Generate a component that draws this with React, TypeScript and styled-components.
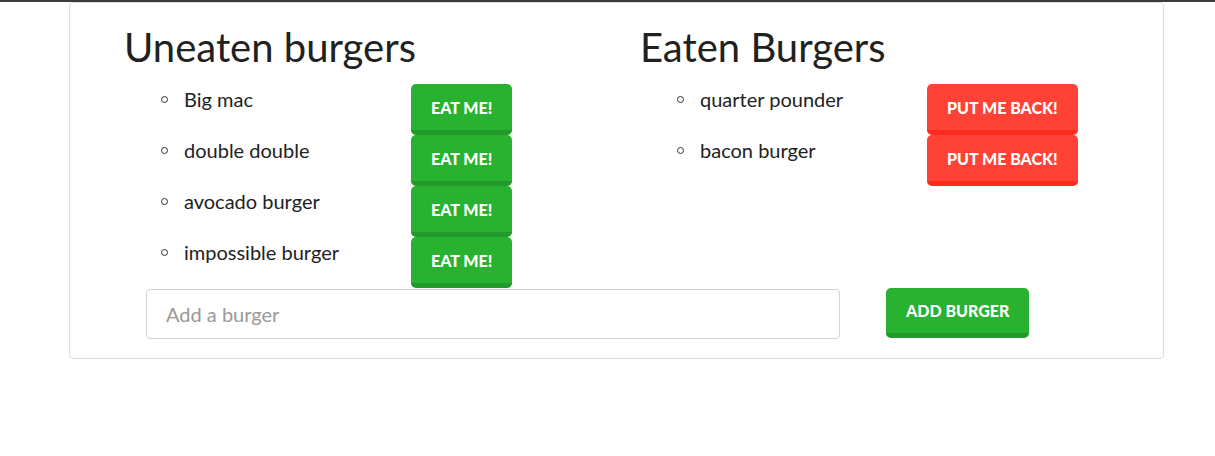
import React from "react";
import styled, { createGlobalStyle } from "styled-components";

const GlobalStyle = createGlobalStyle`
  html, body { margin: 0; padding: 0; background: #fff; }
  body {
    border-top: 2px solid #3c3c3c;
    font-family: Lato, "Noto Sans", sans-serif;
    color: #222;
  }
  * { box-sizing: border-box; }
`;

const Card = styled.div`
  margin-left: 69px;
  width: 1095px;
  border: 1px solid #dddddd;
  border-radius: 4px;
  padding: 20px 0 19px 0;
`;

const Columns = styled.div`
  display: grid;
  grid-template-columns: 516px 516px;
  padding-left: 55px;
`;

const Column = styled.section`
  display: flex;
  flex-direction: column;
`;

const Heading = styled.h1`
  margin: 0 0 13px -1px;
  font-size: 40px;
  font-weight: 400;
  line-height: 48px;
  color: #212121;
`;

const List = styled.ul`
  list-style: none;
  margin: 0;
  padding: 0;
`;

const Item = styled.li`
  display: grid;
  grid-template-columns: 59px 227px auto;
  align-items: start;
`;

const Bullet = styled.span`
  justify-self: end;
  margin: 12px 16px 0 0;
  width: 7px;
  height: 7px;
  border: 1px solid #333;
  border-radius: 50%;
`;

const Name = styled.span`
  font-size: 20px;
  line-height: 30px;
  color: #222;
`;

const ActionButton = styled.button<{ $tone: "green" | "red" }>`
  justify-self: start;
  height: 51px;
  padding: 0 20px;
  border: none;
  border-bottom: 5px solid ${(p) => (p.$tone === "green" ? "#22992a" : "#ff2b1f")};
  border-radius: 5px;
  background: ${(p) => (p.$tone === "green" ? "#28b22f" : "#ff4136")};
  color: #fff;
  font-family: Lato, "Noto Sans", sans-serif;
  font-weight: 900;
  font-size: 16px;
  text-transform: uppercase;
  cursor: pointer;
`;

const Form = styled.form`
  display: grid;
  grid-template-columns: 694px auto;
  column-gap: 46px;
  align-items: start;
  padding-left: 76px;
`;

const Input = styled.input`
  height: 50px;
  margin-top: 1px;
  padding: 0 19px;
  border: 1px solid #ced4da;
  border-radius: 4px;
  font-family: Lato, "Noto Sans", sans-serif;
  font-size: 20px;
  color: #333;
  outline: none;
  &::placeholder { color: #999; }
`;

const AddButton = styled(ActionButton)`
  height: 50px;
`;

const uneaten = ["Big mac", "double double", "avocado burger", "impossible burger"];
const eaten = ["quarter pounder", "bacon burger"];

export default function App() {
  return (
    <>
      <GlobalStyle />
      <Card>
        <Columns>
          <Column>
            <Heading>Uneaten burgers</Heading>
            <List>
              {uneaten.map((b) => (
                <Item key={b}>
                  <Bullet />
                  <Name>{b}</Name>
                  <ActionButton $tone="green">Eat me!</ActionButton>
                </Item>
              ))}
            </List>
          </Column>
          <Column>
            <Heading>Eaten Burgers</Heading>
            <List>
              {eaten.map((b) => (
                <Item key={b}>
                  <Bullet />
                  <Name>{b}</Name>
                  <ActionButton $tone="red">Put me back!</ActionButton>
                </Item>
              ))}
            </List>
          </Column>
        </Columns>
        <Form onSubmit={(e) => e.preventDefault()}>
          <Input placeholder="Add a burger" />
          <AddButton $tone="green" type="submit">Add burger</AddButton>
        </Form>
      </Card>
    </>
  );
}
